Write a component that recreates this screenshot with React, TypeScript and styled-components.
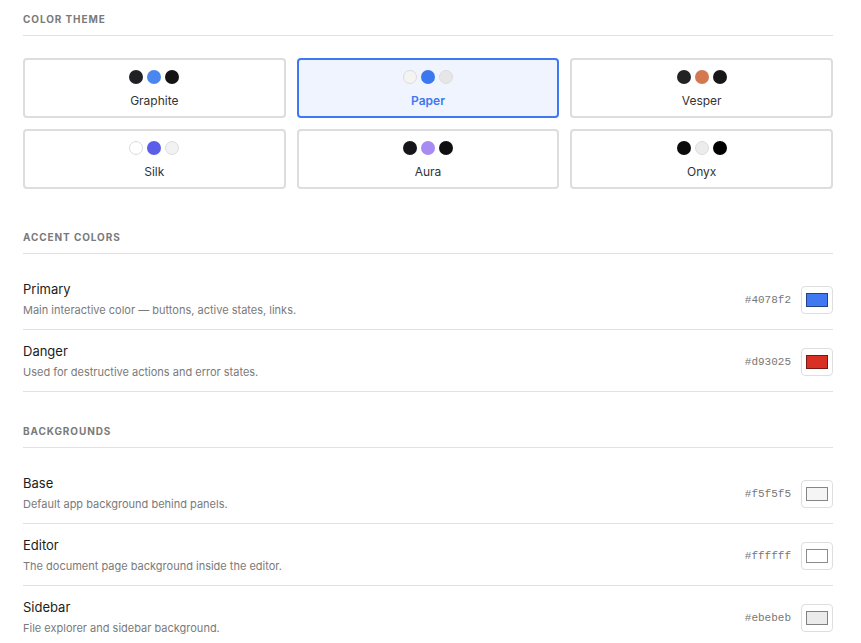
import React, { useState } from "react";
import styled, { createGlobalStyle } from "styled-components";

const GlobalStyle = createGlobalStyle`
  html, body { margin: 0; padding: 0; background: #ffffff; }
  body { font-family: Inter, "Noto Sans", sans-serif; color: #1c1c1c; }
  * { box-sizing: border-box; }
`;

type Theme = { name: string; dots: string[] };

const themes: Theme[] = [
  { name: "Graphite", dots: ["#1f2124", "#4a86f0", "#141414"] },
  { name: "Paper", dots: ["#f4f4f1", "#3b78ef", "#e6e6e6"] },
  { name: "Vesper", dots: ["#232323", "#d3784f", "#171717"] },
  { name: "Silk", dots: ["#ffffff", "#5a5ee8", "#f2f2f2"] },
  { name: "Aura", dots: ["#16161a", "#a88bf2", "#0f0f12"] },
  { name: "Onyx", dots: ["#0b0b0b", "#ececec", "#000000"] },
];

const accents = [
  { title: "Primary", desc: "Main interactive color — buttons, active states, links.", hex: "#4078f2" },
  { title: "Danger", desc: "Used for destructive actions and error states.", hex: "#d93025" },
];

const backgrounds = [
  { title: "Base", desc: "Default app background behind panels.", hex: "#f5f5f5" },
  { title: "Editor", desc: "The document page background inside the editor.", hex: "#ffffff" },
  { title: "Sidebar", desc: "File explorer and sidebar background.", hex: "#ebebeb" },
];

export default function App() {
  const [active, setActive] = useState("Paper");

  return (
    <Page>
      <GlobalStyle />
      <Section $gap={42}>
        <SectionHeader>Color Theme</SectionHeader>
        <ThemeGrid>
          {themes.map((t) => (
            <ThemeCard key={t.name} $active={active === t.name} onClick={() => setActive(t.name)}>
              <Dots>
                {t.dots.map((c, i) => (
                  <Dot key={i} style={{ background: c }} $light={isLight(c)} />
                ))}
              </Dots>
              <ThemeName $active={active === t.name}>{t.name}</ThemeName>
            </ThemeCard>
          ))}
        </ThemeGrid>
      </Section>

      <Section $gap={33}>
        <SectionHeader>Accent Colors</SectionHeader>
        <Rows>
          {accents.map((r) => (
            <ColorRow key={r.title} {...r} />
          ))}
        </Rows>
      </Section>

      <Section $gap={0}>
        <SectionHeader>Backgrounds</SectionHeader>
        <Rows>
          {backgrounds.map((r) => (
            <ColorRow key={r.title} {...r} />
          ))}
        </Rows>
      </Section>
    </Page>
  );
}

function isLight(hex: string) {
  const n = parseInt(hex.slice(1), 16);
  const r = (n >> 16) & 255, g = (n >> 8) & 255, b = n & 255;
  return r * 0.3 + g * 0.59 + b * 0.11 > 200;
}

function ColorRow({ title, desc, hex }: { title: string; desc: string; hex: string }) {
  return (
    <Row>
      <RowText>
        <RowTitle>{title}</RowTitle>
        <RowDesc>{desc}</RowDesc>
      </RowText>
      <RowControl>
        <Hex>{hex}</Hex>
        <SwatchButton>
          <Swatch style={{ background: hex }} />
        </SwatchButton>
      </RowControl>
    </Row>
  );
}

const Page = styled.div`
  padding: 13px 28px 0 23px;
  width: 861px;
`;

const Section = styled.section<{ $gap: number }>`
  margin-bottom: ${(p) => p.$gap}px;
`;

const SectionHeader = styled.div`
  font-size: 10px;
  font-weight: 700;
  letter-spacing: 0.09em;
  text-transform: uppercase;
  color: #7a7a7a;
  line-height: 13px;
  padding-bottom: 9px;
  border-bottom: 1px solid #e2e2e2;
`;

const ThemeGrid = styled.div`
  display: grid;
  grid-template-columns: repeat(3, 1fr);
  gap: 11px;
  margin-top: 22px;
`;

const ThemeCard = styled.button<{ $active: boolean }>`
  height: 60px;
  border: 2px solid ${(p) => (p.$active ? "#4078f2" : "#dddddd")};
  border-radius: 4px;
  background: ${(p) => (p.$active ? "#f0f4fe" : "#ffffff")};
  display: flex;
  flex-direction: column;
  align-items: center;
  padding: 10px 0 0;
  gap: 9px;
  cursor: pointer;
  font-family: inherit;
`;

const Dots = styled.div`
  display: flex;
  gap: 4px;
`;

const Dot = styled.span<{ $light: boolean }>`
  width: 14px;
  height: 14px;
  border-radius: 50%;
  border: ${(p) => (p.$light ? "1px solid #dcdcdc" : "none")};
`;

const ThemeName = styled.span<{ $active: boolean }>`
  font-size: 12px;
  line-height: 16px;
  font-weight: ${(p) => (p.$active ? 600 : 400)};
  color: ${(p) => (p.$active ? "#4078f2" : "#333333")};
`;

const Rows = styled.div`
  margin-top: 14px;
`;

const Row = styled.div`
  display: flex;
  align-items: center;
  justify-content: space-between;
  padding: 13px 0 11px;
  border-bottom: 1px solid #e2e2e2;
`;

const RowText = styled.div`
  display: flex;
  flex-direction: column;
`;

const RowTitle = styled.div`
  font-size: 13px;
  line-height: 16px;
  font-weight: 400;
  color: #1c1c1c;
`;

const RowDesc = styled.div`
  font-size: 11px;
  line-height: 15px;
  color: #7a7a7a;
  margin-top: 6px;
`;

const RowControl = styled.div`
  display: flex;
  align-items: center;
  gap: 10px;
`;

const Hex = styled.span`
  font-family: "Liberation Mono", "DejaVu Sans Mono", monospace;
  font-size: 11px;
  color: #777777;
`;

const SwatchButton = styled.div`
  width: 32px;
  height: 28px;
  border: 1px solid #dedede;
  border-radius: 4px;
  background: #ffffff;
  display: flex;
  align-items: center;
  justify-content: center;
`;

const Swatch = styled.span`
  width: 22px;
  height: 14px;
  border: 1px solid rgba(0, 0, 0, 0.45);
`;
